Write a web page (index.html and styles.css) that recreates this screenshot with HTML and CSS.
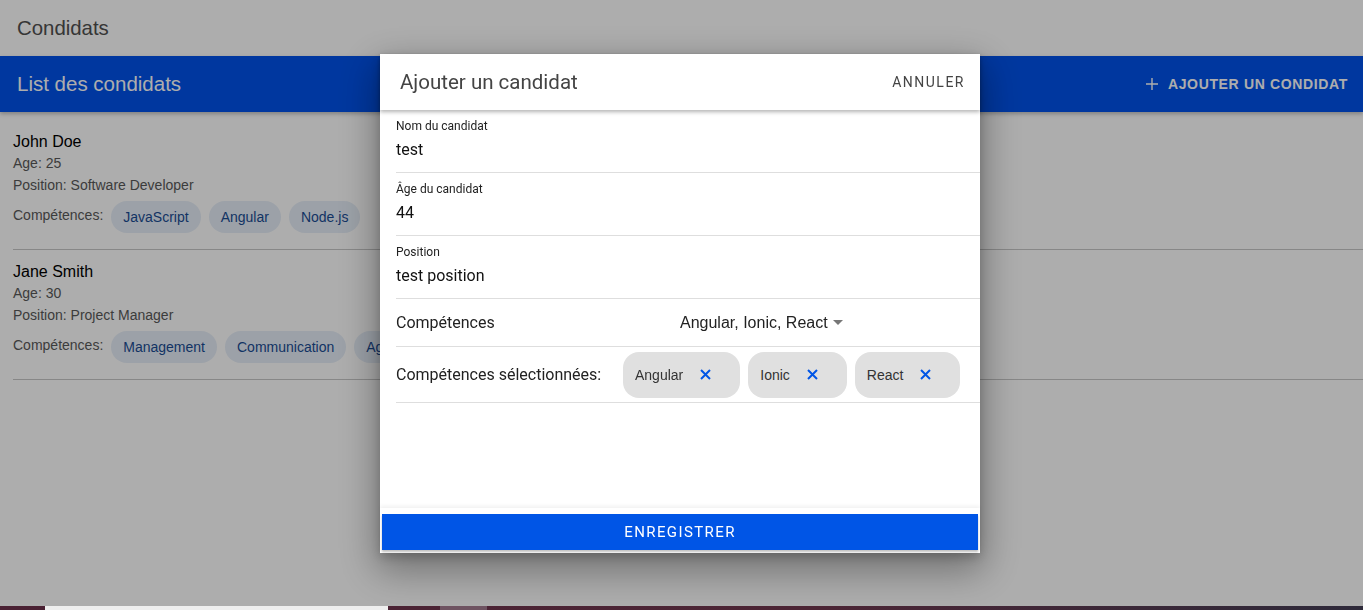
FILE: index.html
```html
<!DOCTYPE html>
<html lang="fr">
<head>
<meta charset="utf-8">
<title>Condidats</title>
<link rel="stylesheet" href="styles.css">
</head>
<body>
<div class="page">
  <header class="topbar"><span class="app-title">Condidats</span></header>
  <div class="toolbar">
    <span class="toolbar-title">List des condidats</span>
    <button class="add-btn">
      <svg class="plus" viewBox="0 0 12 12" width="12" height="12"><path d="M6 0v12M0 6h12" stroke="currentColor" stroke-width="1.4" fill="none"/></svg>
      AJOUTER UN CONDIDAT
    </button>
  </div>
  <ul class="list">
    <li class="item">
      <div class="name">John Doe</div>
      <div class="meta">Age: 25</div>
      <div class="meta">Position: Software Developer</div>
      <div class="skills">
        <span class="skills-label">Compétences:</span>
        <span class="chip">JavaScript</span>
        <span class="chip">Angular</span>
        <span class="chip">Node.js</span>
      </div>
    </li>
    <li class="item">
      <div class="name">Jane Smith</div>
      <div class="meta">Age: 30</div>
      <div class="meta">Position: Project Manager</div>
      <div class="skills">
        <span class="skills-label">Compétences:</span>
        <span class="chip">Management</span>
        <span class="chip">Communication</span>
        <span class="chip">Agile</span>
      </div>
    </li>
  </ul>
</div>

<div class="backdrop"></div>

<div class="modal">
  <div class="modal-header">
    <span class="modal-title">Ajouter un candidat</span>
    <button class="cancel">ANNULER</button>
  </div>
  <div class="modal-body">
    <div class="field">
      <label class="field-label">Nom du candidat</label>
      <div class="field-value">test</div>
    </div>
    <div class="field">
      <label class="field-label">Âge du candidat</label>
      <div class="field-value">44</div>
    </div>
    <div class="field">
      <label class="field-label">Position</label>
      <div class="field-value">test position</div>
    </div>
    <div class="select-row">
      <span class="select-label">Compétences</span>
      <span class="select-value">Angular, Ionic, React<span class="caret"></span></span>
    </div>
    <div class="selected-row">
      <span class="selected-label">Compétences sélectionnées:</span>
      <div class="mchips">
        <span class="mchip">Angular<svg class="x" viewBox="0 0 11 11" width="11" height="11"><path d="M1 1L10 10M10 1L1 10" stroke="currentColor" stroke-width="2" fill="none"/></svg></span>
        <span class="mchip">Ionic<svg class="x" viewBox="0 0 11 11" width="11" height="11"><path d="M1 1L10 10M10 1L1 10" stroke="currentColor" stroke-width="2" fill="none"/></svg></span>
        <span class="mchip">React<svg class="x" viewBox="0 0 11 11" width="11" height="11"><path d="M1 1L10 10M10 1L1 10" stroke="currentColor" stroke-width="2" fill="none"/></svg></span>
      </div>
    </div>
  </div>
  <div class="modal-footer">
    <button class="save">ENREGISTRER</button>
  </div>
</div>

<div class="taskbar">
  <span class="tb-a"></span><span class="tb-b"></span><span class="tb-c"></span><span class="tb-d"></span><span class="tb-e"></span>
</div>
</body>
</html>
```

FILE: styles.css
```css
* { box-sizing: border-box; }
html, body { margin: 0; padding: 0; height: 100%; }
body {
  font-family: "Liberation Sans", Arial, sans-serif;
  background: #fff;
  overflow: hidden;
}
.page { height: 610px; }
.topbar {
  height: 56px;
  display: flex;
  align-items: center;
  padding-left: 17px;
  background: #fff;
}
.app-title { font-size: 20.4px; color: #505050; }
.toolbar {
  height: 56px;
  background: #0052eb;
  display: flex;
  align-items: center;
  justify-content: space-between;
  padding: 0 15px 0 17px;
  box-shadow: 0 2px 4px rgba(0,0,0,0.25);
}
.toolbar-title { font-size: 20.5px; color: #fff; }
.add-btn {
  border: 0; background: transparent; color: #fff;
  font-family: "Liberation Sans", Arial, sans-serif;
  font-size: 14px; font-weight: 700; letter-spacing: 0.65px;
  display: flex; align-items: center; gap: 10px;
  padding: 0;
}
.plus { display: block; }
.list { list-style: none; margin: 0; padding: 8px 0 0 13px; }
.item {
  padding: 12px 0 16px;
  border-bottom: 1px solid #c8c8c8;
}
.name { font-size: 16px; color: #000; line-height: 20px; }
.meta { font-size: 14px; color: #595959; line-height: 22px; }
.skills { display: flex; align-items: center; gap: 8px; margin-top: 5px; }
.skills-label { font-size: 14px; color: #595959; position: relative; top: -2px; }
.chip {
  height: 32px; padding: 0 12px;
  border-radius: 16px;
  background: #e6eef8;
  color: #1a4c94;
  font-size: 14px;
  display: inline-flex; align-items: center;
}

.backdrop {
  position: fixed; inset: 0;
  background: rgba(0,0,0,0.32);
}

.modal {
  position: fixed;
  left: 380px; top: 54px;
  width: 600px; height: 499px;
  background: #fff;
  display: flex; flex-direction: column;
  box-shadow: 0 14px 36px 4px rgba(0,0,0,0.35), 0 4px 10px rgba(0,0,0,0.2);
  font-family: "Roboto", "Liberation Sans", sans-serif;
}
.modal-header {
  height: 56px; flex: none;
  display: flex; align-items: center; justify-content: space-between;
  padding: 0 15px 0 20px;
  box-shadow: 0 2px 4px rgba(0,0,0,0.3);
  position: relative; z-index: 1;
}
.modal-title { font-size: 20.5px; color: #444; }
.cancel {
  border: 0; background: transparent; padding: 0;
  font-family: "Roboto", sans-serif;
  font-size: 14px; letter-spacing: 1.5px; color: #444;
}
.modal-body { flex: 1; padding-left: 16px; }
.field {
  height: 63px;
  border-bottom: 1px solid #dedede;
  padding-top: 9px;
}
.field-label { display: block; font-size: 12px; color: #222; line-height: 14px; }
.field-value { font-size: 16px; color: #111; margin-top: 7px; line-height: 20px; }
.select-row {
  height: 48px;
  display: flex; align-items: center;
  border-bottom: 1px solid #dedede;
}
.select-label { font-size: 16px; color: #222; width: 284px; }
.select-value {
  font-family: "Liberation Sans", Arial, sans-serif;
  font-size: 16px; color: #222; display: inline-flex; align-items: center;
}
.caret {
  width: 0; height: 0; margin-left: 5px;
  border-left: 5.5px solid transparent; border-right: 5.5px solid transparent;
  border-top: 5px solid #777;
}
.selected-row {
  height: 56px;
  display: flex; align-items: center;
  border-bottom: 1px solid #dedede;
}
.selected-label { font-size: 16px; color: #222; width: 227px; }
.mchips { display: flex; gap: 8px; }
.mchip {
  height: 46px;
  padding: 0 29px 0 12px;
  border-radius: 16px;
  background: #e0e0e0;
  color: #333;
  font-family: "Liberation Sans", Arial, sans-serif;
  font-size: 14px;
  display: inline-flex; align-items: center; gap: 17px;
}
.x { color: #0055e6; display: block; }
.modal-footer {
  flex: none;
  padding: 6px 2px 3px;
  box-shadow: 0 -2px 4px rgba(0,0,0,0.06);
  position: relative;
}
.save {
  width: 100%; height: 36px;
  border: 0; background: #0055e6;
  color: #fff;
  font-family: "Roboto", sans-serif;
  font-size: 15px; font-weight: 400; letter-spacing: 1.4px;
  box-shadow: 0 2px 2px rgba(0,0,0,0.25);
}

.taskbar {
  position: fixed; left: 0; right: 0; bottom: 0;
  height: 4px;
  display: flex;
  background: linear-gradient(90deg, #4a2133, #4c2535 60%, #2e2a3a);
}
.tb-a { width: 45px; }
.tb-b { width: 343px; background: #eeeeee; }
.tb-c { width: 52px; }
.tb-d { width: 47px; background: #6e5361; }
.tb-e { flex: 1; }
```
